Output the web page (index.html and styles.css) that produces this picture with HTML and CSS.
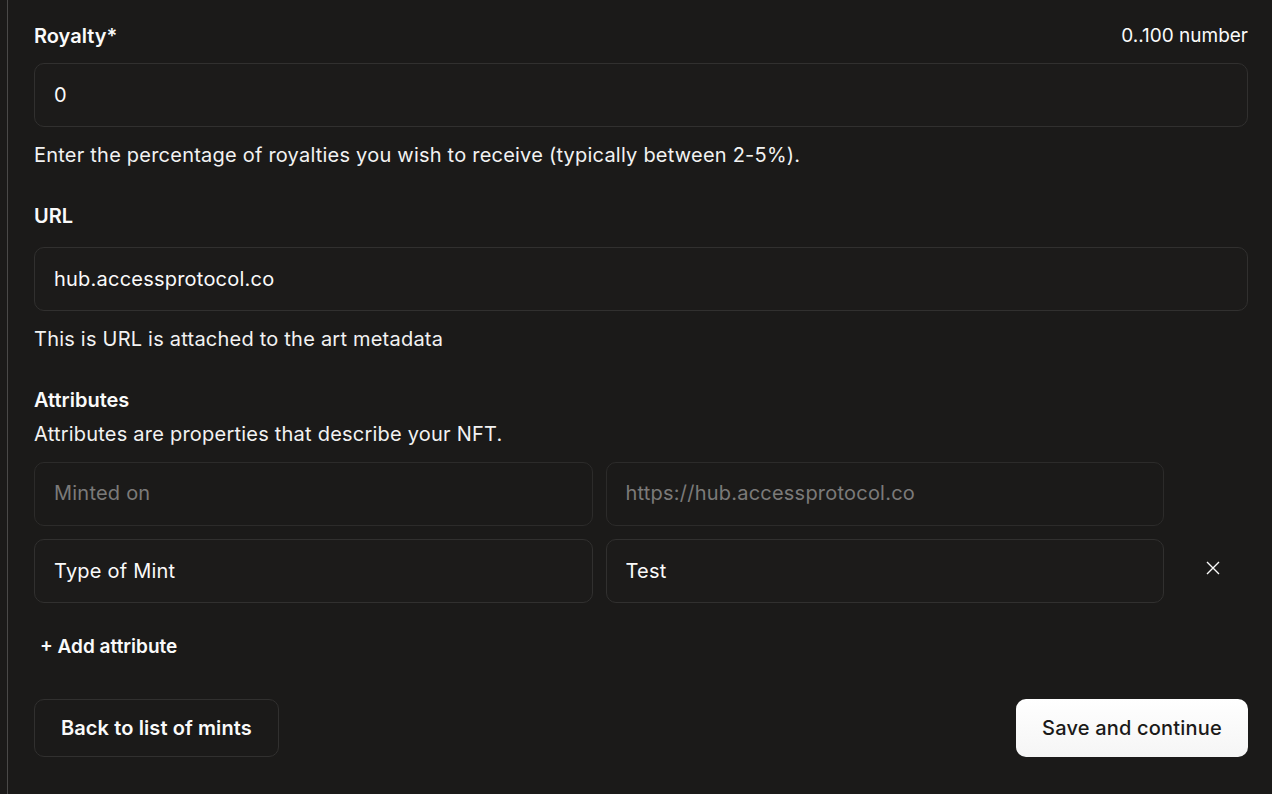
FILE: index.html
```html
<!DOCTYPE html>
<html lang="en">
<head>
<meta charset="utf-8">
<title>Mint settings</title>
<link rel="stylesheet" href="styles.css">
</head>
<body>
<div class="shell">
  <main class="form">
    <div class="label-row">
      <label class="label">Royalty*</label>
      <span class="hint">0..100 number</span>
    </div>
    <input class="field royalty-input" value="0">
    <p class="help">Enter the percentage of royalties you wish to receive (typically between 2-5%).</p>

    <label class="label url-label">URL</label>
    <input class="field url-input" value="hub.accessprotocol.co">
    <p class="help">This is URL is attached to the art metadata</p>

    <label class="label attr-label">Attributes</label>
    <p class="attr-desc">Attributes are properties that describe your NFT.</p>

    <div class="attr-grid">
      <input class="field disabled" placeholder="Minted on" disabled>
      <input class="field disabled" placeholder="https://hub.accessprotocol.co" disabled>
      <span></span>
      <input class="field" value="Type of Mint">
      <input class="field" value="Test">
      <button class="remove" aria-label="Remove attribute">
        <svg width="14" height="14" viewBox="0 0 14 14"><path d="M1 1L13 13M13 1L1 13" stroke="#fafafa" stroke-width="1.4" fill="none"/></svg>
      </button>
    </div>

    <button class="add">+ Add attribute</button>

    <div class="actions">
      <button class="btn btn-secondary">Back to list of mints</button>
      <button class="btn btn-primary">Save and continue</button>
    </div>
  </main>
</div>
</body>
</html>
```

FILE: styles.css
```css
* { box-sizing: border-box; }
html, body {
  margin: 0;
  padding: 0;
  background: #1b1a19;
  height: 100%;
}
body {
  font-family: Inter, "Noto Sans", sans-serif;
  color: #fafafa;
  font-size: 20px;
  line-height: 28px;
}
.shell {
  margin-left: 7px;
  border-left: 1px solid #4a4948;
  min-height: 100%;
  padding: 22px 24px 0 26px;
}
.form {
  display: flex;
  flex-direction: column;
}
.label-row {
  display: flex;
  justify-content: space-between;
  align-items: center;
}
.label {
  font-weight: 600;
  font-size: 20px;
  line-height: 28px;
}
.hint {
  font-weight: 400;
  font-size: 19px;
}
.field {
  font-family: Inter, "Noto Sans", sans-serif;
  font-size: 20px;
  letter-spacing: 0.22px;
  color: #fafafa;
  background: #1c1b1a;
  border: 1px solid #31302f;
  border-radius: 10px;
  height: 64px;
  padding: 0 19px;
  outline: none;
  width: 100%;
}
.field::placeholder { color: #7b7a79; }
.field.disabled {
  background: #1b1a19;
  border-color: #2c2b2a;
  padding-bottom: 3px;
}
.royalty-input { margin-top: 13px; }
.url-input { margin-top: 17px; }
.help {
  margin: 14px 0 0;
  color: #f2f2f2;
  letter-spacing: 0.22px;
}
.url-label { margin-top: 33px; }
.attr-label { margin-top: 33px; }
.attr-desc {
  margin: 6px 0 0;
  color: #f2f2f2;
  letter-spacing: 0.22px;
}
.attr-grid {
  margin-top: 14px;
  display: grid;
  grid-template-columns: 1fr 1fr 71px;
  column-gap: 13px;
  row-gap: 13px;
}
.remove {
  background: none;
  border: none;
  padding: 0;
  display: flex;
  align-items: center;
  justify-content: center;
  cursor: pointer;
  margin-top: -6px;
}
.add {
  align-self: flex-start;
  background: none;
  border: none;
  color: #fafafa;
  font-family: Inter, "Noto Sans", sans-serif;
  font-size: 19px;
  font-weight: 600;
  line-height: 28px;
  padding: 0 0 0 6px;
  margin-top: 30px;
}
.actions {
  margin-top: 38px;
  display: flex;
  justify-content: space-between;
}
.btn {
  font-family: Inter, "Noto Sans", sans-serif;
  font-size: 20px;
  height: 58px;
  border-radius: 10px;
  padding: 0 26px;
  cursor: pointer;
}
.btn-secondary {
  background: #1b1a19;
  border: 1px solid #31302f;
  color: #fafafa;
  font-weight: 600;
  letter-spacing: 0.1px;
}
.btn-primary {
  background: linear-gradient(#ffffff, #f5f5f5);
  border: none;
  color: #1b1a19;
  font-weight: 500;
  letter-spacing: 0.2px;
}
```
